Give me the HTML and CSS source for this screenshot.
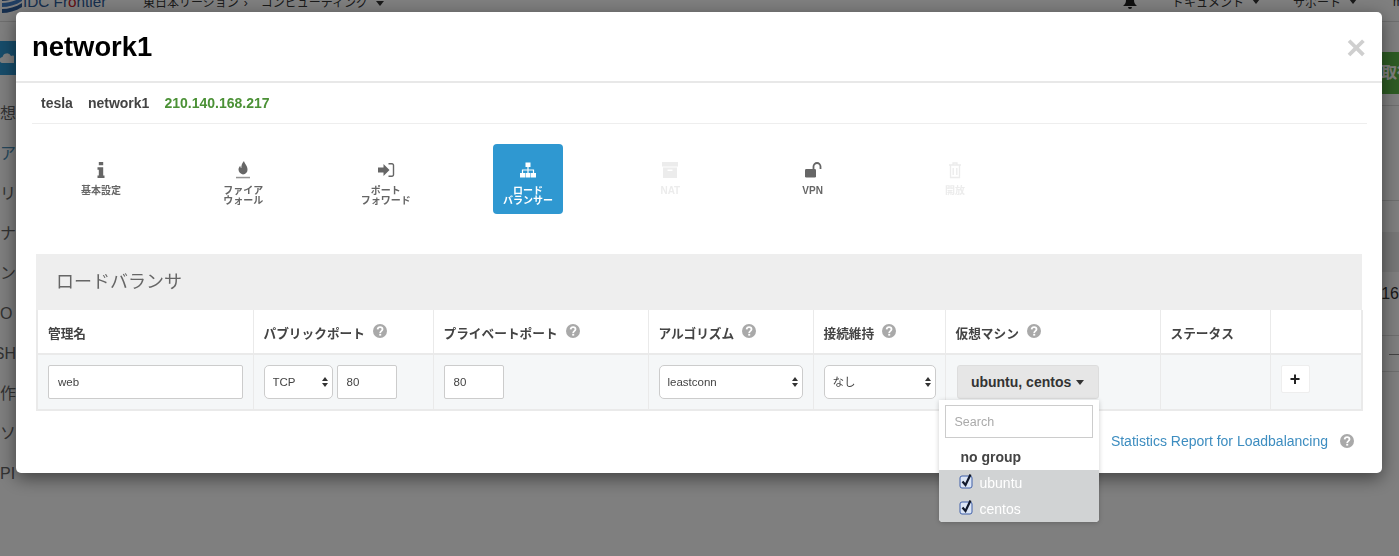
FILE: index.html
```html
<!DOCTYPE html>
<html lang="ja">
<head>
<meta charset="utf-8">
<title>network1</title>
<link rel="stylesheet" href="styles.css">
</head>
<body>
<svg class="sprite" aria-hidden="true">
  <symbol id="q" viewBox="0 0 14 14">
    <circle cx="7" cy="7" r="7" fill="#a9a9a9"/>
    <path d="M4.6 5.4C4.8 3.9 5.8 3.2 7.1 3.2c1.4 0 2.4.9 2.4 2 0 1.900-2.300 1.900-2.300 3.700" fill="none" stroke="#fff" stroke-width="1.800"/>
    <rect x="6.200" y="9.800" width="2" height="1.800" fill="#fff"/>
  </symbol>
</svg>

<div class="page">
  <header class="topbar">
    <svg class="logo" viewBox="0 0 24 24"><path d="M2 7c6 0 14-2 20-6v4C16 9 8 11 2 11z" fill="#2c5d9c"/><path d="M2 13c6 0 14-2 20-6v4c-6 4-14 6-20 6z" fill="#3f7cc4"/><path d="M2 19c6 0 14-2 20-6v4c-6 4-14 6-20 6z" fill="#2c5d9c"/></svg>
    <span class="brand">IDC Fr<span class="brand-dot">o</span>ntier</span>
    <nav class="crumbs">東日本リージョン<span class="crumb-sep">›</span>コンピューティング<i class="caret crumb-caret"></i></nav>
    <nav class="topnav">
      <svg class="bell" viewBox="0 0 14 14"><path d="M7 0c3 0 4 2 4 5 0 3 1 4 3 6H0c2-2 3-3 3-6 0-3 1-5 4-5zM5 12h4a2 2 0 0 1-4 0z" fill="#222"/></svg>
      <span class="topnav-item">ドキュメント<i class="caret"></i></span>
      <span class="topnav-item">サポート<i class="caret"></i></span>
      <span class="topnav-end">m</span>
    </nav>
  </header>
  <div class="content">
    <aside class="sidebar">
      <div class="side-brand"><svg class="cloud" viewBox="0 0 14 14"><path d="M3 12a3 3 0 0 1-.5-6A4.500 4.500 0 0 1 11 5a3.500 3.500 0 0 1 3 7z" fill="#fff"/></svg></div>
      <ul class="side-list">
        <li>想</li>
        <li class="side-active">ア</li>
        <li>リ</li>
        <li>ナ</li>
        <li>ン</li>
        <li>O</li>
        <li class="side-end">SH</li>
        <li>作</li>
        <li>ソ</li>
        <li>PI</li>
      </ul>
    </aside>
    <main class="main">
      <div class="action-row"><span class="action-btn">取得</span></div>
      <div class="bg-line bg-line-first"></div>
      <div class="bg-line bg-line-second"></div>
      <div class="bg-head"></div>
      <div class="bg-row bg-row-tall"><span>16</span></div>
      <div class="bg-row bg-row-dash"><span class="bg-dash"></span></div>
    </main>
  </div>
</div>

<div class="backdrop"></div>

<section class="modal">
  <div class="modal-head">
    <h1 class="modal-title">network1</h1>
    <span class="modal-close">×</span>
  </div>
  <div class="modal-body">
    <div class="info">
      <span>tesla</span>
      <span>network1</span>
      <span class="info-ip">210.140.168.217</span>
    </div>

    <div class="tabs">
      <div class="tab">
        <svg class="tab-icon" viewBox="0 0 18 18"><path d="M6.800 1h4.400v3.300H6.800zM5.500 6.300h5.700v8.200h1.300V17h-7v-2.500h1.300V8.800H5.500z"/></svg>
        <div class="tab-label">基本設定</div>
      </div>
      <div class="tab">
        <svg class="tab-icon" viewBox="0 0 18 18"><path d="M10 0c.4 2.500 3.500 4.500 3.500 8.200A4.800 4.800 0 0 1 9 13.500C6.500 13 4.500 11 4.500 8.500c0-1.700.8-2.800 1.800-3.800 0 1.300.4 2 1.100 2.300C7 4.500 8.300 2 10 0z"/><rect x="2" y="15.800" width="14" height="1.500" opacity=".7"/></svg>
        <div class="tab-label">ファイア<br>ウォール</div>
      </div>
      <div class="tab">
        <svg class="tab-icon" viewBox="0 0 18 18"><path d="M1 6.500h5.500V3l6 6-6 6v-3.500H1z"/><path d="M11.500 2.700H15a1.500 1.500 0 0 1 1.500 1.500v9.600a1.500 1.500 0 0 1-1.500 1.500h-3.500" fill="none" stroke="currentColor" stroke-width="1.400"/></svg>
        <div class="tab-label">ポート<br>フォワード</div>
      </div>
      <div class="tab tab-active">
        <svg class="tab-icon" viewBox="0 0 18 18"><path d="M6.500 1.500h5v4.500h-5zM1 12h5v4.500H1zM6.500 12h5v4.500h-5zM12 12h5v4.500h-5z"/><path d="M9 6v6M3.500 12V9h11v3" fill="none" stroke="currentColor" stroke-width="1.200"/></svg>
        <div class="tab-label">ロード<br>バランサー</div>
      </div>
      <div class="tab tab-disabled">
        <svg class="tab-icon" viewBox="0 0 18 18"><path d="M1 1h16v4.500H1zM2 6.500h14V17H2zM6.500 8.500v1.500h5V8.500z" fill-rule="evenodd"/></svg>
        <div class="tab-label">NAT</div>
      </div>
      <div class="tab">
        <svg class="tab-icon" viewBox="0 0 18 18"><rect x="1" y="8" width="11" height="8.500" rx="1.300"/><path d="M9.500 8V5.500a3.500 3.500 0 0 1 7 0V8" fill="none" stroke="currentColor" stroke-width="1.800"/></svg>
        <div class="tab-label">VPN</div>
      </div>
      <div class="tab tab-disabled">
        <svg class="tab-icon" viewBox="0 0 18 18"><path d="M3 4h12M7 3.500V2h4v1.500M4.500 4.500V16.500h9V4.500M7.200 7v7M10.800 7v7" fill="none" stroke="currentColor" stroke-width="1.300"/></svg>
        <div class="tab-label">開放</div>
      </div>
    </div>

    <div class="panel">
      <h2 class="panel-title">ロードバランサ</h2>
      <table class="lb-table">
        <colgroup>
          <col class="col-name"><col class="col-public"><col class="col-private"><col class="col-algo"><col class="col-persist"><col class="col-vm"><col class="col-status"><col class="col-action">
        </colgroup>
        <thead>
          <tr>
            <th>管理名</th>
            <th>パブリックポート<svg class="help"><use href="#q"/></svg></th>
            <th>プライベートポート<svg class="help"><use href="#q"/></svg></th>
            <th>アルゴリズム<svg class="help"><use href="#q"/></svg></th>
            <th>接続維持<svg class="help"><use href="#q"/></svg></th>
            <th>仮想マシン<svg class="help"><use href="#q"/></svg></th>
            <th>ステータス</th>
            <th></th>
          </tr>
        </thead>
        <tbody>
          <tr>
            <td><input class="field field-name" value="web"></td>
            <td>
              <div class="port-group">
                <span class="sel sel-proto"><select><option>TCP</option></select></span>
                <input class="field field-port" value="80">
              </div>
            </td>
            <td><input class="field field-port" value="80"></td>
            <td><span class="sel sel-algo"><select><option>leastconn</option></select></span></td>
            <td><span class="sel sel-persist"><select><option>なし</option></select></span></td>
            <td>
              <div class="multi">
                <button class="multi-btn" type="button">ubuntu, centos <i class="caret caret-btn"></i></button>
                <div class="multi-menu">
                  <div class="multi-search"><input class="multi-input" placeholder="Search"></div>
                  <div class="multi-group">no group</div>
                  <div class="multi-item">
                    <svg class="check" viewBox="0 0 14 16"><rect x="1" y="3" width="12" height="12" rx="2" fill="#dbe5f6" stroke="#3f5fa8"/><path d="M3.500 8.500l3 3.500L11.500 1.500" fill="none" stroke="#10182c" stroke-width="2.200"/></svg>
                    <span>ubuntu</span>
                  </div>
                  <div class="multi-item">
                    <svg class="check" viewBox="0 0 14 16"><rect x="1" y="3" width="12" height="12" rx="2" fill="#dbe5f6" stroke="#3f5fa8"/><path d="M3.500 8.500l3 3.500L11.500 1.500" fill="none" stroke="#10182c" stroke-width="2.200"/></svg>
                    <span>centos</span>
                  </div>
                </div>
              </div>
            </td>
            <td></td>
            <td><button class="plus-btn" type="button">+</button></td>
          </tr>
        </tbody>
      </table>
    </div>

    <div class="modal-foot">
      <a class="stats-link">Statistics Report for Loadbalancing</a>
      <svg class="help help-foot"><use href="#q"/></svg>
    </div>
  </div>
</section>
</body>
</html>
```
FILE: styles.css
```css
* { box-sizing: border-box; }
html, body { margin: 0; padding: 0; height: 100%; overflow: hidden; }
body {
  background: #fff;
  color: #333;
  font-family: "Liberation Sans", "Noto Sans CJK JP", sans-serif;
}
.sprite { display: none; }

/* page behind the dialog */
.page { margin-top: -18px; }
.topbar {
  display: flex;
  align-items: center;
  height: 40px;
  border-bottom: 1px solid #ddd;
  font-size: 12px;
  color: #333;
}
.logo { width: 24px; height: 24px; flex: none; margin-top: 0; }
.brand { font-size: 15.300px; color: #2c5d9c; margin-left: -1px; width: 120px; flex: none; }
.brand-dot { color: #c8202a; }
.crumbs { white-space: nowrap; }
.crumb-sep { margin: 0 13px 0 5px; }
.crumb-caret { margin-left: 8px; }
.topnav { margin-left: auto; display: flex; align-items: center; white-space: nowrap; }
.bell { width: 14px; height: 14px; margin-right: 35px; }
.topnav-item { display: flex; align-items: center; gap: 8px; margin-right: 33px; }
.topnav-end { margin: 0 -1px 0 3px; width: 7px; overflow: hidden; }
.caret {
  display: inline-block;
  border-left: 4px solid transparent;
  border-right: 4px solid transparent;
  border-top: 5px solid #333;
  vertical-align: 1px;
}

.content { display: flex; }
.sidebar { width: 16px; flex: none; padding-top: 19px; }
.side-brand {
  height: 34px;
  background: #2f9ad6;
  display: flex;
  align-items: center;
}
.cloud { width: 14px; height: 14px; }
.side-list {
  list-style: none;
  margin: 19px 0 0;
  padding: 0;
  font-size: 16px;
  color: #666;
}
.side-list li {
  height: 40px;
  line-height: 40px;
  display: flex;
  justify-content: flex-start;
  white-space: nowrap;
}
.side-list .side-end { justify-content: flex-end; }
.side-active { color: #4a8fb8; }

.main { flex: 1; padding-top: 30px; min-width: 0; overflow: hidden; }
.action-row { height: 42px; display: flex; justify-content: flex-end; }
.action-btn {
  width: 18px;
  background: #5cb848;
  color: #fff;
  font-size: 16px;
  font-weight: bold;
  line-height: 42px;
  white-space: nowrap;
  overflow: hidden;
}
.bg-line { border-bottom: 1px solid #ddd; }
.bg-line-first { height: 12px; }
.bg-line-second { height: 95px; }
.bg-head { height: 40px; margin-top: 31px; background: #eee; }
.bg-row {
  display: flex;
  justify-content: flex-end;
  border-bottom: 1px solid #ddd;
  font-size: 16px;
  color: #333;
}
.bg-row-tall { height: 64px; padding-top: 13px; }
.bg-row-dash { height: 36px; align-items: center; }
.bg-dash { width: 10px; height: 1px; background: #888; margin-top: 2px; }

.backdrop {
  position: fixed;
  inset: 0;
  background: rgba(0, 0, 0, 0.5);
}

/* dialog */
.modal {
  position: fixed;
  left: 16px;
  top: 12px;
  width: 1366px;
  height: 461px;
  background: #fff;
  border-radius: 5px;
  box-shadow: 0 5px 18px rgba(0, 0, 0, 0.5);
}
.modal-head {
  height: 71px;
  padding: 0 16px 0 16px;
  border-bottom: 2px solid #e8e8e8;
  display: flex;
  align-items: center;
  justify-content: space-between;
}
.modal-title { margin: 0; font-size: 27.400px; font-weight: bold; color: #000; }
.modal-close { font-size: 34px; font-weight: bold; color: #cfcfcf; line-height: 1; }
.modal-body { padding: 0 15px 0 16px; }

.info {
  height: 41px;
  padding-left: 9px;
  border-bottom: 1px solid #eee;
  display: flex;
  align-items: center;
  gap: 15px;
  font-size: 14px;
  font-weight: bold;
  color: #444;
}
.info-ip { color: #4b9136; }

.tabs { display: flex; gap: 72.330px; margin-top: 20px; padding-left: 34px; }
.tab {
  width: 70px;
  height: 70px;
  flex: none;
  padding-top: 17px;
  border-radius: 4px;
  color: #666;
  text-align: center;
}
.tab-icon { display: block; width: 18px; height: 18px; margin: 0 auto 7px; fill: currentColor; }
.tab-label { font-size: 10px; line-height: 10px; font-weight: bold; }
.tab-active { background: #2f98d1; color: #fff; }
.tab-disabled { color: #ececec; }

.panel { margin: 40px 0 0 4px; width: 1326px; }
.panel-title {
  margin: 0;
  height: 56px;
  padding-left: 20px;
  background: #eee;
  font-size: 18px;
  font-weight: normal;
  line-height: 56px;
  color: #666;
}
.lb-table {
  width: 1325px;
  table-layout: fixed;
  border-collapse: collapse;
  border: 2px solid #eaeaea;
  border-top: 0;
}
.col-name { width: 216px; }
.col-public { width: 180px; }
.col-private { width: 215px; }
.col-algo { width: 165px; }
.col-persist { width: 132px; }
.col-vm { width: 215px; }
.col-status { width: 110px; }
.col-action { width: 92px; }

.lb-table th {
  height: 44px;
  padding: 1px 10px 0;
  background: #fff;
  border-left: 1px solid #eaeaea;
  border-bottom: 2px solid #eaeaea;
  text-align: left;
  font-size: 12.700px;
  font-weight: bold;
  color: #444;
  white-space: nowrap;
}
.lb-table td {
  height: 55px;
  padding: 10px;
  background: #f5f7f8;
  border-left: 1px solid #eaeaea;
  vertical-align: top;
}
.help { width: 14px; height: 14px; margin-left: 8px; vertical-align: 0; }

.field, .sel select {
  height: 34px;
  background: #fff;
  border: 1px solid #ccc;
  font-family: inherit;
  font-size: 11.500px;
  color: #444;
  outline: none;
}
.field { padding: 0 9px; border-radius: 2px; display: block; }
.field-name { width: 195px; }
.field-port { width: 60px; }
.port-group { display: flex; gap: 4px; }

.sel { position: relative; display: block; }
.sel select {
  width: 100%;
  padding: 0 8px;
  border-radius: 5px;
  appearance: none;
  -webkit-appearance: none;
}
.sel::before, .sel::after {
  content: "";
  position: absolute;
  right: 5px;
  border-left: 3px solid transparent;
  border-right: 3px solid transparent;
  pointer-events: none;
}
.sel::before { top: 12px; border-bottom: 4px solid #333; }
.sel::after { top: 18px; border-top: 4px solid #333; }
.sel-proto { width: 69px; }
.sel-algo { width: 144px; }
.sel-persist { width: 112px; }

.multi { position: relative; width: 142px; margin-left: 1px; }
.multi-btn {
  display: block;
  width: 142px;
  height: 34px;
  padding: 0;
  background: #e6e6e6;
  border: 1px solid #ddd;
  border-radius: 3px;
  font-family: inherit;
  font-size: 14px;
  font-weight: bold;
  color: #333;
  white-space: nowrap;
}
.caret-btn { vertical-align: 2px; margin-left: 1px; }
.multi-menu {
  position: absolute;
  left: -18px;
  top: 35px;
  z-index: 2;
  width: 160px;
  background: #fff;
  border-radius: 0 0 4px 4px;
  box-shadow: 0 1px 5px rgba(0, 0, 0, 0.2);
  overflow: hidden;
}
.multi-search { padding: 5px 6px 0; }
.multi-input {
  display: block;
  width: 148px;
  height: 33px;
  padding: 0 9px;
  border: 1px solid #ccc;
  font-family: inherit;
  font-size: 12.500px;
  outline: none;
}
.multi-input::placeholder { color: #aaa; opacity: 1; }
.multi-group {
  height: 32px;
  padding: 9px 0 0 22px;
  font-size: 14px;
  line-height: 20px;
  font-weight: bold;
  color: #444;
}
.multi-item {
  height: 26px;
  padding-left: 20px;
  display: flex;
  align-items: center;
  gap: 7px;
  background: #d1d3d4;
  color: #fff;
  font-size: 14px;
}
.check { width: 14px; height: 16px; margin-top: -4px; }

.plus-btn {
  display: block;
  width: 29px;
  height: 28px;
  padding: 0;
  background: #fff;
  border: 1px solid #eee;
  border-radius: 2px;
  font-family: inherit;
  font-size: 18px;
  font-weight: bold;
  line-height: 24px;
  color: #222;
}

.modal-foot {
  display: flex;
  justify-content: flex-end;
  align-items: center;
  height: 20px;
  margin-top: 20px;
  padding-right: 13px;
}
.stats-link { font-size: 14px; color: #3d8dc0; }
.help-foot { margin-left: 12px; }
```
